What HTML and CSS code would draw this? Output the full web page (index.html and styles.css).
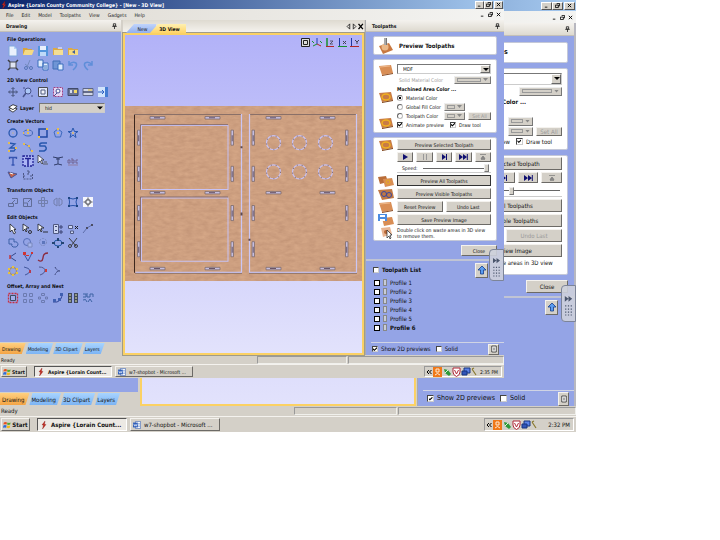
FILE: index.html
```
<!DOCTYPE html>
<html lang="en">
<head>
	<meta charset="utf-8">
	<title>Aspire</title>
	<meta name="viewport" content="width=device-width,initial-scale=1.0">
	<link rel="stylesheet" href="styles.css">
</head>
<body>
<!-- shared icons -->
<svg class="defs" aria-hidden="true">
	<defs>
		<filter id="grain" x="0" y="0" width="100%" height="100%" color-interpolation-filters="sRGB">
			<feTurbulence type="fractalNoise" baseFrequency="0.13 0.3" numOctaves="3" seed="4"/>
			<feColorMatrix values="0.3 0.1 0 0 0.61  0.3 0.1 0 0 0.43  0.25 0.1 0 0 0.33  0 0 0 0 1"/>
		</filter>
		<symbol id="i-wood" viewBox="0 0 16 12"><path d="M1 2l12-1 2 8-11 2z" fill="#d98e55"/><path d="M4 11l11-2v1L4 12z" fill="#8a4a20"/><path d="M2 3l10-1" stroke="#efb98b"/></symbol>
		<symbol id="i-woodring" viewBox="0 0 16 12"><path d="M1 2l12-1 2 8-11 2z" fill="#c87c45"/><path d="M4 11l11-2v1L4 12z" fill="#7d4219"/><ellipse cx="8" cy="6" rx="4" ry="3" fill="none" stroke="#f0b020" stroke-width="1.5"/></symbol>
		<symbol id="i-woods" viewBox="0 0 16 12"><path d="M0 1l8-1 2 6-8 2z" fill="#b96d38"/><path d="M5 3l9-1 2 7-9 2z" fill="#d98e55"/><circle cx="10" cy="6" r="2" fill="none" stroke="#e9ad20"/></symbol>
		<symbol id="i-up" viewBox="0 0 10 10"><path d="M5 1l4 4H6.500v4h-3V5H1z" fill="#5b9cf0" stroke="#143c8c" stroke-width=".8"/></symbol>
		<symbol id="i-pin" viewBox="0 0 6 8"><path d="M1.500 1h3v3h-3zM0 4.500h6M3 4.500V8" fill="none" stroke="#111"/></symbol>
		<symbol id="i-min" viewBox="0 0 6 6"><path d="M1 5h3" stroke="#000"/></symbol>
		<symbol id="i-res" viewBox="0 0 6 6"><path d="M2 .5h3.500v3H4M.5 2.500H4v3H.5z" fill="none" stroke="#000"/></symbol>
		<symbol id="i-x" viewBox="0 0 6 6"><path d="M1 1l4 4M5 1L1 5" stroke="#000" stroke-width="1.100"/></symbol>
		<symbol id="i-play" viewBox="0 0 10 8"><path d="M3 1l5 3-5 3z" fill="#101070"/></symbol>
		<symbol id="i-pause" viewBox="0 0 10 8"><path d="M3.500 1v6M6.500 1v6" stroke="#999"/></symbol>
		<symbol id="i-step" viewBox="0 0 10 8"><path d="M3 1l4 3-4 3z" fill="#101070"/><path d="M7.500 1v6" stroke="#101070"/></symbol>
		<symbol id="i-ff" viewBox="0 0 10 8"><path d="M1 1l4 3-4 3zM5 1l4 3-4 3z" fill="#101070"/><path d="M9.300 1v6" stroke="#101070"/></symbol>
		<symbol id="i-eject" viewBox="0 0 10 8"><path d="M2 1.500h6M3 6.500h4M5 3l2 2.500H3z" fill="#888" stroke="#777" stroke-width=".7"/></symbol>
		<symbol id="i-flag" viewBox="0 0 10 9"><path d="M1 1.500q2-1.500 4 0L4.500 4q-2-1-4 0z" fill="#e8501e"/><path d="M5.500 1.500q2 1 4 0L9 4q-2 1-4 0z" fill="#53a832"/><path d="M.5 5q2-1 4 0L4 8q-2-1-4 0z" fill="#2c6bd8"/><path d="M5 5q2 1 4 0L8.500 8q-2 1-4 0z" fill="#f3bb1a"/></symbol>
		<symbol id="i-aspire" viewBox="0 0 8 8"><path d="M5 0L2 4h1.500L2.500 8 6 3.500H4.500z" fill="#c8281c" stroke="#701010" stroke-width=".3"/></symbol>
		<symbol id="i-word" viewBox="0 0 10 10"><path d="M3 .5h6.500v9H3z" fill="#fff" stroke="#5a7ab8"/><path d="M5 3h4M5 5h4M5 7h4" stroke="#88a4d8"/><path d="M0 2h6v6H0z" fill="#2c5cb8"/><path d="M1 3.500l1 3 1-2 1 2 1-3" fill="none" stroke="#fff" stroke-width=".8"/></symbol>
		<symbol id="i-grip" viewBox="0 0 14 34"><path d="M3 9l4 3-4 3zM7 9l4 3-4 3z" fill="#4a556c"/><path d="M4 19v11M7 19v11M10 19v11" stroke="#4a556c" stroke-width="1.300" stroke-dasharray="1.300 2"/></symbol>
		<symbol id="i-tray" viewBox="0 0 52 10"><path d="M4 3L2 5l2 2M6.500 3l-2 2 2 2" fill="none" stroke="#000"/><path d="M8 0h9v10H8z" fill="#f07818"/><path d="M11 2h3v3h-3zM10 8q2.500-3 5 0" fill="none" stroke="#ffe8d0"/><path d="M19 2l4 1 3 4-2 2-4-3z" fill="#2e9a38"/><path d="M20 6l3-3" stroke="#dff0df"/><path d="M28 1h7v4q0 3-3.500 4.500Q28 8 28 5z" fill="#fff" stroke="#b02838"/><path d="M29.500 3l2 4 2-4" fill="none" stroke="#b02838"/><path d="M39 1h6v5h-6z" fill="#5b82e8" stroke="#17347e"/><path d="M37 4h5v4h-5z" fill="#3155b8" stroke="#17347e"/><path d="M47 2l4 6M47 2l2-1" stroke="#8a7a30" stroke-width="1.200"/></symbol>
		<symbol id="i-sheet" viewBox="0 0 8 10"><path d="M1 1h6v8H1z" fill="#fff" stroke="#222"/><path d="M3 3h2v4H3z" fill="#888"/></symbol>
		<symbol id="i-cursor" viewBox="0 0 12 12"><path d="M3 1v8l2-2 2 4 1.500-1L7 6.500h2z" fill="#fff" stroke="#111" stroke-width=".8"/></symbol>
	</defs>
</svg>

<!-- Rear screen -->
<div class="screen rear">
	<div class="titlebar">
		<span class="winbtns">
			<button aria-label="Minimize"><svg><use href="#i-min"/></svg></button><button aria-label="Restore"><svg><use href="#i-res"/></svg></button><button class="shut" aria-label="Close window"><svg><use href="#i-x"/></svg></button>
		</span>
	</div>
	<div class="menubar">
		<span class="docbtns">
			<svg><use href="#i-min"/></svg><svg><use href="#i-res"/></svg><svg><use href="#i-x"/></svg>
		</span>
	</div>
	<div class="work">
		<div class="side">
			<div class="side-body"></div>
			<div class="pages">
				<button class="page on">Drawing</button><button class="page">Modeling</button><button class="page">3D Clipart</button><button class="page">Layers</button>
			</div>
		</div>
		<div class="view"><div class="canvas"></div></div>
		<div class="panel">
			<div class="panel-head"><svg class="pin"><use href="#i-pin"/></svg></div>
			<div class="panel-body">
				<div class="card heading"><h2>Preview Toolpaths</h2></div>
				<div class="card">
					<div class="fields">
						<div class="combo"><select aria-label="Material"><option></option></select></div>
						<div class="row end"><button class="swatch wide" aria-label="Solid color"><i></i></button></div>
						<div class="row strong">Machined Area Color ...</div>
						<div class="row"></div>
						<div class="row swatches"><button class="swatch" aria-label="Fill color"><i></i></button></div>
						<div class="row swatches"><button class="swatch" aria-label="Toolpath color"><i></i></button><button class="btn setall" disabled>Set All</button></div>
						<div class="row checks"><span>Animate preview</span><label><input type="checkbox" checked>Draw tool</label></div>
					</div>
				</div>
				<div class="card actions">
					<div class="stack">
						<button class="btn">Preview Selected Toolpath</button>
						<div class="transport">
							<button class="btn" aria-label="Play"></button><button class="btn" aria-label="Pause"></button><button class="btn" aria-label="Step"><svg><use href="#i-step"/></svg></button><button class="btn" aria-label="Fast"><svg><use href="#i-ff"/></svg></button><button class="btn" aria-label="End"><svg><use href="#i-eject"/></svg></button>
						</div>
						<div class="speed"><input type="range" aria-label="Speed" min="0" max="100" value="40"></div>
						<button class="btn">Preview All Toolpaths</button>
						<button class="btn">Preview Visible Toolpaths</button>
						<div class="pair"><button class="btn" aria-label="Reset"></button><button class="btn" disabled>Undo Last</button></div>
						<button class="btn">Save Preview Image</button>
						<p class="hint">Double click on waste areas in 3D view</p>
					</div>
				</div>
				<div class="closerow"><button class="btn">Close</button></div>
			</div>
			<div class="list">
				<div class="list-head"><button class="btn up" aria-label="Move up"><svg><use href="#i-up"/></svg></button></div>
			</div>
			<div class="panel-foot">
				<label><input type="checkbox" checked>Show 2D previews</label>
				<label><input type="checkbox">Solid</label>
				<button class="btn sheet" aria-label="Sheet"><svg><use href="#i-sheet"/></svg></button>
			</div>
		</div>
	</div>
	<div class="status"><span>Ready</span><i></i><i></i></div>
	<div class="taskbar">
		<button class="btn start"><svg><use href="#i-flag"/></svg>Start</button>
		<button class="btn task on"><svg><use href="#i-aspire"/></svg>Aspire {Lorain Count...</button>
		<button class="btn task"><svg><use href="#i-word"/></svg>w7-shopbot - Microsoft ...</button>
		<div class="tray"><svg><use href="#i-tray"/></svg><span>2:32 PM</span></div>
	</div>
	<svg class="grip"><use href="#i-grip"/></svg>
</div>

<!-- Front screen -->
<div class="screen front">
	<div class="titlebar">
		<svg class="logo"><use href="#i-aspire"/></svg>
		<span class="caption">Aspire {Lorain County Community College} - [New - 3D View]</span>
		<span class="winbtns">
			<button aria-label="Minimize"><svg><use href="#i-min"/></svg></button><button aria-label="Restore"><svg><use href="#i-res"/></svg></button><button class="shut" aria-label="Close window"><svg><use href="#i-x"/></svg></button>
		</span>
	</div>
	<div class="menubar">
		<a href="#">File</a><a href="#">Edit</a><a href="#">Model</a><a href="#">Toolpaths</a><a href="#">View</a><a href="#">Gadgets</a><a href="#">Help</a>
		<span class="docbtns">
			<svg><use href="#i-min"/></svg><svg><use href="#i-res"/></svg><svg><use href="#i-x"/></svg>
		</span>
	</div>
	<div class="work">
		<div class="side">
			<div class="panel-head"><b>Drawing</b><svg class="pin"><use href="#i-pin"/></svg></div>
			<div class="side-body">
				<section class="group">
					<h3>File Operations</h3>
					<div class="tools">
						<svg viewBox="0 0 12 12"><path d="M2 1h5l3 3v7H2z" fill="#f4faff" stroke="#7fa8dc"/><path d="M7 1v3h3" fill="#b8d8f8"/></svg>
						<svg viewBox="0 0 12 12"><path d="M1 3h4l1 1h4v6H1z" fill="#e0a52c"/><path d="M3 5h9l-2 5H1z" fill="#ffe07a"/></svg>
						<svg viewBox="0 0 12 12"><path d="M1 1h10v10H1z" fill="#4c94dc"/><path d="M3 1h6v4H3z" fill="#f4f8ff"/><path d="M3 7h6v4H3z" fill="#c4e0fa"/></svg>
						<svg viewBox="0 0 12 12"><path d="M1 3h4l1 1h5v6H1z" fill="#e6ac35"/><path d="M2 5h9v5H2z" fill="#ffe58c"/><path d="M6 3h4" stroke="#fff"/></svg>
						<svg viewBox="0 0 12 12"><path d="M1 3h4l1 1h5v6H1z" fill="#e6ac35"/><path d="M2 5h9v5H2z" fill="#ffe07a"/><path d="M5 7l3-2v4z" fill="#3a5a90"/></svg>
					</div>
					<div class="tools">
						<svg viewBox="0 0 12 12"><path d="M3 3h6v6H3z" fill="#e8ecf4" stroke="#444"/><path d="M1 1l2 2M11 1L9 3M1 11l2-2M11 11L9 9" stroke="#333" stroke-width="1.500"/></svg>
						<svg viewBox="0 0 12 12"><path d="M8 1L5 8M3 5l5 4" stroke="#7088b8"/><circle cx="4" cy="9" r="1.500" fill="none" stroke="#5070b0"/><circle cx="9" cy="9" r="1.500" fill="none" stroke="#5070b0"/></svg>
						<svg viewBox="0 0 12 12"><path d="M1 1h5v7H1zM6 4h5v7H6z" fill="#e8f4ff" stroke="#3068b8"/><path d="M7 7h3M7 9h3" stroke="#3068b8"/></svg>
						<svg viewBox="0 0 12 12"><path d="M1 2h7v8H1z" fill="#6c94d4" stroke="#3868b0"/><path d="M6 5h5v6H6z" fill="#e8f4ff" stroke="#3068b8"/></svg>
						<svg viewBox="0 0 12 12"><path d="M2 2v4h4M2 6q3-4 7-2 2 3-3 7" fill="none" stroke="#5a8cd8" stroke-width="1.500"/></svg>
						<svg viewBox="0 0 12 12"><path d="M10 2v4H6M10 6Q7 2 3 4q-2 3 3 7" fill="none" stroke="#5a8cd8" stroke-width="1.500"/></svg>
					</div>
				</section>
				<section class="group">
					<h3>2D View Control</h3>
					<div class="tools">
						<svg viewBox="0 0 12 12"><path d="M6 2v8M2 6h8M4.500 3L6 1.500 7.500 3M4.500 9L6 10.500 7.500 9M3 4.500L1.500 6 3 7.500M9 4.500L10.500 6 9 7.500" fill="none" stroke="#3b4668"/></svg>
						<svg viewBox="0 0 12 12"><circle cx="6" cy="5" r="3" fill="#aecbf8" stroke="#404b80"/><path d="M4 7l-3 4" stroke="#404b80" stroke-width="1.500"/><path d="M1 2h2M9 10h2" stroke="#404b80"/></svg>
						<svg viewBox="0 0 12 12"><path d="M1.500 1.500h9v9h-9z" fill="#e8eefc" stroke="#444"/><path d="M4 4h4v4H4z" fill="#fff" stroke="#4c5878"/></svg>
						<svg viewBox="0 0 12 12"><path d="M1.500 1.500h9v9h-9z" fill="#f0dcf4" stroke="#a03878" stroke-dasharray="2 1"/><circle cx="6" cy="5" r="2" fill="#fff" stroke="#40488c"/><path d="M5 7l-3 3" stroke="#40488c"/></svg>
						<svg viewBox="0 0 12 12"><path d="M1 2.500h10v7H1z" fill="#68718c" stroke="#39415c"/><path d="M3 4h2v3H3z" fill="#dfe3f0"/><path d="M7 4h3v3H7z" fill="#ffe05a"/></svg>
						<svg viewBox="0 0 12 12"><path d="M1 2.500h10v7H1z" fill="#d8dce8" stroke="#59617c"/><path d="M1 6h10" stroke="#39415c" stroke-width="1.500"/><path d="M6 4h4" stroke="#e8bd20"/></svg>
						<svg viewBox="0 0 12 12"><path d="M1 1h10v10H1z" fill="#d8ecff"/><path d="M8 1h3v10H8z" fill="#3b78d0"/><path d="M1 6h6M5 4l2 2-2 2" fill="none" stroke="#2058c0"/></svg>
					</div>
				</section>
				<div class="layer">
					<svg viewBox="0 0 12 12"><path d="M1 8l5-3 5 2-5 4z" fill="#fff" stroke="#222"/><path d="M1 5l5-3 5 2-5 4z" fill="#fff" stroke="#222"/></svg>
					<label for="layer">Layer</label>
					<div class="combo"><select id="layer"><option>hid</option></select></div>
				</div>
				<section class="group">
					<h3>Create Vectors</h3>
					<div class="tools">
						<svg viewBox="0 0 12 12"><circle cx="6" cy="6" r="4" fill="none" stroke="#1d4fa8" stroke-width="1.300"/><path d="M5.500 5.500h1v1h-1z" fill="#eec040"/></svg>
						<svg viewBox="0 0 12 12"><ellipse cx="6" cy="6" rx="4.500" ry="3" fill="none" stroke="#3c62b0"/><path d="M5 2h2v2H5zM1 5h1v2H1zM5 5h2v2H5z" fill="#eec040"/></svg>
						<svg viewBox="0 0 12 12"><path d="M2 2h8v8H2z" fill="none" stroke="#123e9c" stroke-width="1.500"/><path d="M9 1h2v2H9zM1 9h2v2H1z" fill="#f6c52e"/></svg>
						<svg viewBox="0 0 12 12"><path d="M6 2l4 3-1.500 5h-5L2 5z" fill="none" stroke="#3563ba"/><path d="M5 1h2v2H5zM5 5h2v2H5z" fill="#eec040"/></svg>
						<svg viewBox="0 0 12 12"><path d="M6 1l1.500 3.500H11l-3 2 1 4-3-2.500-3 2.500 1-4-3-2h3.500z" fill="none" stroke="#1d4fa8"/><path d="M5 5h2v2H5z" fill="#d8b880"/></svg>
					</div>
					<div class="tools">
						<svg viewBox="0 0 12 12"><path d="M2 2l6 1-5 4h6l-2 3H3" fill="none" stroke="#1d4fa8" stroke-width="1.300"/><path d="M1 1h2v2H1zM8 6h2v2H8zM1 9h2v2H1z" fill="#eec040"/></svg>
						<svg viewBox="0 0 12 12"><path d="M2 3q5 1 7 7" fill="none" stroke="#707894"/><path d="M1 2h2v2H1zM6 4h2v2H6zM9 9h2v2H9z" fill="#eec040"/></svg>
						<svg viewBox="0 0 12 12"><path d="M10 2H5Q2 2 3 5h5q3 3-1 5H2" fill="none" stroke="#1d4fa8" stroke-width="1.500"/></svg>
					</div>
					<div class="tools">
						<svg viewBox="0 0 12 12"><path d="M2.500 4V2.500h7V4M6 2v8M4.500 10h3" fill="none" stroke="#2c4cac" stroke-width="1.300"/></svg>
						<svg viewBox="0 0 12 12"><path d="M1 1h10v10H1z" fill="#b0b8f8" stroke="#14148c" stroke-dasharray="2 1" stroke-width="1.300"/><path d="M3 3.500h6M6 3.500V10" stroke="#14148c" stroke-width="1.500"/></svg>
						<svg viewBox="0 0 12 12"><path d="M1 0v8l2-2 2 3 1-1-2-3h3z" fill="#fff" stroke="#111" stroke-width=".7"/><path d="M6 9h5M7 7h3" stroke="#555"/></svg>
						<svg viewBox="0 0 12 12"><path d="M1 2q5 2 10 0M2 10q4-2 8 0M6 3v6M4 4h4" fill="none" stroke="#27325c"/></svg>
						<svg viewBox="0 0 12 12"><path d="M1 5h2v3H1zM5 3v5h2V5H5M11 5H9v3h2" fill="none" stroke="#6c5d88"/><path d="M1 10h10" stroke="#907898"/></svg>
					</div>
					<div class="tools">
						<svg viewBox="0 0 12 12"><path d="M1 3l9 2-6 4z" fill="#c85c3c" stroke="#444c88"/><path d="M3 4l3 1" stroke="#fff"/></svg>
						<svg viewBox="0 0 12 12"><path d="M1.500 4v6h9V4M1 7h3M8 7h3" fill="none" stroke="#46507c" stroke-dasharray="2 1"/><path d="M5 2h2v2H6v2" fill="none" stroke="#46507c"/></svg>
					</div>
				</section>
				<section class="group">
					<h3>Transform Objects</h3>
					<div class="tools">
						<svg viewBox="0 0 12 12"><path d="M1.500 7.500h5v3h-5zM5 2.500h5.500v5H8" fill="none" stroke="#5c6890"/><path d="M4 8l4-4" stroke="#5c6890"/></svg>
						<svg viewBox="0 0 12 12"><path d="M1.500 2.500h8v8h-8zM1.500 7h4v3.500" fill="none" stroke="#5c6890"/><path d="M6 6l3-3" stroke="#5c6890"/></svg>
						<svg viewBox="0 0 12 12"><path d="M1.500 4.500h9v3h-9zM4.500 1.500h3v9h-3z" fill="none" stroke="#6f7ba6"/></svg>
						<svg viewBox="0 0 12 12"><path d="M5 2L2 4v4l3 2zM7 2l3 2v4l-3 2z" fill="none" stroke="#6f7ba6"/></svg>
						<svg viewBox="0 0 12 12"><path d="M2 2q4 2 8 0-2 4 0 8-4-1-8 0 1-4 0-8z" fill="none" stroke="#1c4aa4"/><path d="M1 1h2v2H1zM9 1h2v2H9zM1 9h2v2H1zM9 9h2v2H9z" fill="#123c78"/></svg>
						<svg viewBox="0 0 12 12"><path d="M1 1h10v10H1z" fill="#fff"/><path d="M4 4h4v4H4zM6 1.500V4M6 8v2.500M1.500 6H4M8 6h2.500" fill="none" stroke="#444"/></svg>
					</div>
				</section>
				<section class="group">
					<h3>Edit Objects</h3>
					<div class="tools">
						<svg><use href="#i-cursor"/></svg>
						<svg viewBox="0 0 12 12"><path d="M1 1v7l2-2 1 3 1-1-1-3h3z" fill="#fff" stroke="#111" stroke-width=".8"/><circle cx="8" cy="9" r="1.500" fill="none" stroke="#222"/></svg>
						<svg viewBox="0 0 12 12"><path d="M1 1v7l2-2 1 3 1-1-1-3h3z" fill="#fff" stroke="#111" stroke-width=".8"/><path d="M6 9h5" stroke="#222"/></svg>
						<svg viewBox="0 0 12 12"><path d="M1.500 1.500h5v9h-5z" fill="#d4dcf4" stroke="#4a5378"/><path d="M3 3.500h2M3 7.500h2M8 3h2v2H8zM8 8h2v2H8z" stroke="#333b68" fill="none"/></svg>
						<svg viewBox="0 0 12 12"><path d="M1.500 2.500h4v3h-4zM3.500 8h3v2.500h-3z" fill="#d4dcf4" stroke="#4a5378"/><path d="M8 3l3 3M11 3L8 6" stroke="#111"/></svg>
						<svg viewBox="0 0 12 12"><path d="M1 10l4-5 5-3" fill="none" stroke="#5868a4"/><path d="M4 4h2v2H4zM9 1h2v2H9z" fill="#445"/></svg>
					</div>
					<div class="tools">
						<svg viewBox="0 0 12 12"><path d="M2 2h5v3q4-1 4 3-1 3-5 2-2-1-1-3H2z" fill="none" stroke="#3558a0"/></svg>
						<svg viewBox="0 0 12 12"><circle cx="5" cy="5" r="3.500" fill="none" stroke="#5068b0"/><path d="M6 6h4v4H6z" fill="#aabaf0" stroke="#7886b8"/></svg>
						<svg viewBox="0 0 12 12"><circle cx="6" cy="5" r="3.500" fill="none" stroke="#7886b8" stroke-dasharray="2 1"/><path d="M5 4h3v3H5z" fill="#5872b8"/></svg>
						<svg viewBox="0 0 12 12"><ellipse cx="6" cy="6" rx="4" ry="3" fill="none" stroke="#12509c"/><path d="M5 1h2v3H5zM0 5h3v2H0zM9 5h3v2H9zM5 9h2v2H5z" fill="#183a66"/></svg>
						<svg viewBox="0 0 12 12"><path d="M2 1l7 8M10 1L4 9" stroke="#333"/><circle cx="3" cy="9" r="1.500" fill="none" stroke="#333"/><circle cx="9" cy="9" r="1.500" fill="none" stroke="#333"/></svg>
					</div>
					<div class="tools">
						<svg viewBox="0 0 12 12"><path d="M9 2L3 6l6 4" fill="none" stroke="#2b3d80"/><path d="M3 4v4" stroke="#c83030" stroke-width="1.500"/></svg>
						<svg viewBox="0 0 12 12"><path d="M2 3l4 7 4-8" fill="none" stroke="#304c9c"/><path d="M1 1h3v3H1zM9 1h2v2H9zM4 4h3v1H4z" fill="#d82820"/></svg>
						<svg viewBox="0 0 12 12"><path d="M1 9q4 3 5-2 0-5 5-5" fill="none" stroke="#8b2030" stroke-width="1.300"/></svg>
					</div>
					<div class="tools">
						<svg viewBox="0 0 12 12"><circle cx="6" cy="6" r="3.500" fill="none" stroke="#a89060" stroke-width="1.300"/><path d="M5 1h2v2H5zM1 7h2v2H1zM9 7h2v2H9zM9 3h2v2H9zM1 3h2v2H1zM5 9h2v2H5z" fill="#f2c52c"/></svg>
						<svg viewBox="0 0 12 12"><path d="M2 2q6 1 6 4-1 3-5 4" fill="none" stroke="#3a4f94"/><path d="M7 5h2v3H7z" fill="#b83040"/></svg>
						<svg viewBox="0 0 12 12"><path d="M2 2q6 0 6 4-1 3-5 4" fill="none" stroke="#4a4f84"/><path d="M8 4h2v3H8z" fill="#d43028"/></svg>
						<svg viewBox="0 0 12 12"><path d="M3 2q2 4 5 4-4 0-5 4" fill="none" stroke="#333d70" stroke-dasharray="3 1"/></svg>
					</div>
				</section>
				<section class="group">
					<h3>Offset, Array and Nest</h3>
					<div class="tools">
						<svg viewBox="0 0 12 12"><path d="M1.500 1.500h9v9h-9z" fill="none" stroke="#cc2432" stroke-width="1.300" stroke-dasharray="2 1"/><path d="M3.500 3.500h5v5h-5z" fill="#a4b0ec" stroke="#345"/></svg>
						<svg viewBox="0 0 12 12"><path d="M1.500 1.500h3v3h-3zM7.500 1.500h3v3h-3zM1.500 7.500h3v3h-3zM7.500 7.500h3v3h-3z" fill="none" stroke="#6877ac"/></svg>
						<svg viewBox="0 0 12 12"><path d="M4.500 1.500h3v2h-3zM4.500 8.500h3v2h-3zM1.500 5h2v2h-2zM8.500 5h2v2h-2z" fill="none" stroke="#6877ac"/></svg>
						<svg viewBox="0 0 12 12"><path d="M1 10h4q5-2 5-8" fill="none" stroke="#283c8c"/><path d="M1 7h3v3H1zM6 6h3v3H6zM8 1h3v3H8z" fill="#3858ac"/></svg>
						<svg viewBox="0 0 12 12"><path d="M1 1h4v10H1zM7 1h4v10H7z" fill="#39404c"/><path d="M2 3h2M2 6h2M8 3h2M8 6h2M2 9h2M8 9h2" stroke="#eef0a8"/></svg>
						<svg viewBox="0 0 12 12"><path d="M1 2h3v3H1M5 1v4h3V2h3v3M1 8q3-2 4 2M6 10l2-3 2 3" fill="none" stroke="#345c9c"/></svg>
					</div>
				</section>
			</div>
			<div class="pages">
				<button class="page on">Drawing</button><button class="page">Modeling</button><button class="page">3D Clipart</button><button class="page">Layers</button>
			</div>
		</div>
		<div class="view">
			<div class="doctabs">
				<button class="doctab">New</button><button class="doctab on">3D View</button>
				<svg class="docnav" viewBox="0 0 20 8"><path d="M4 1v6L1 4zM8 1v6l3-3z" fill="none" stroke="#222"/><path d="M14 1l5 6M19 1l-5 6" stroke="#000" stroke-width="1.500"/></svg>
			</div>
			<div class="canvas">
				<svg class="axes" viewBox="0 0 60 12">
					<path d="M1.500 1.500h8v8h-8z" fill="#ddd" stroke="#222"/><path d="M3.500 3.500h4v4h-4z" fill="none" stroke="#222"/>
					<path d="M17 1v6" stroke="#2040b0"/><path d="M17 7l-4 2" stroke="#18912c"/><path d="M17 7l4 2" stroke="#b02828"/><path d="M12 4l2 2M20 4l2 2" stroke="#18912c"/>
					<path d="M27 1v9" stroke="#189030" stroke-width="1.500"/><path d="M26 9.500h8" stroke="#b02828"/><path d="M30 4h3l-3 3h3" fill="none" stroke="#445" stroke-width=".8"/>
					<path d="M39.500 1v9" stroke="#2038a0"/><path d="M38 9.500h9" stroke="#189030"/><path d="M43 4l3 3M46 4l-3 3" stroke="#445"/>
					<path d="M51.500 1v9" stroke="#2038a0"/><path d="M50 9.500h9" stroke="#b02828"/><path d="M55 3l2 2 2-2M57 5v2" fill="none" stroke="#445"/>
				</svg>
				<!-- sheet of MDF with the cut profiles -->
				<svg class="board" viewBox="124 107 237 174" preserveAspectRatio="none">
					<defs>
						<g id="slot-h"><path d="M0 0h15v2.500H0z" fill="#c4bde0" stroke="#7e6b6c" stroke-width=".8"/><path d="M4 1.200h6" stroke="#6a5668"/></g>
						<g id="slot-v"><path d="M0 0h2.500v15H0z" fill="#c4bde0" stroke="#7e6b6c" stroke-width=".8"/><path d="M1.200 5v6" stroke="#6a5668"/></g>
						<g id="hrow"><use href="#slot-h" x="149"/><use href="#slot-h" x="204"/><use href="#slot-h" x="265"/><use href="#slot-h" x="319"/></g>
						<g id="vcol"><use href="#slot-v" y="131"/><use href="#slot-v" y="167"/><use href="#slot-v" y="206"/><use href="#slot-v" y="242"/></g>
					</defs>
					<path d="M124 107h238v174H124z" fill="#cd9f80"/>
					<path d="M124 107h238v174H124z" filter="url(#grain)" opacity=".3"/>
					<path d="M133.500 273V115" stroke="#3e281e"/>
					<path d="M133 115.500h107.500M248 115.500h108" stroke="#8a7068"/>
					<path d="M134.500 272.500h106V115M248.500 115v157.500h107V115" fill="none" stroke="#cbc6f4" stroke-width="1.200"/>
					<path d="M134 273.500h107M248 273.500h108" stroke="#74625f" stroke-width=".7"/>
					<path d="M140.500 126.500h86.500V190h-86.500zM140.500 198.500h86.500V261.500h-86.500z" fill="none" stroke="#c8c2f4"/>
					<path d="M139.500 190v-64.500H227M139.500 261v-63.500H227" fill="none" stroke="#6f5c68" stroke-width=".7"/>
					<use href="#hrow" y="117.500"/><use href="#hrow" y="192"/><use href="#hrow" y="267.500"/>
					<use href="#vcol" x="136.500"/><use href="#vcol" x="230"/><use href="#vcol" x="251"/><use href="#vcol" x="344.500"/>
					<g fill="none" stroke="#c8c2f2" stroke-width="1.200"><circle cx="272.500" cy="143.500" r="7"/><circle cx="298.500" cy="143.500" r="7"/><circle cx="324.500" cy="143.500" r="7"/><circle cx="272.500" cy="172.500" r="7"/><circle cx="298.500" cy="172.500" r="7"/><circle cx="324.500" cy="172.500" r="7"/></g>
					<g fill="none" stroke="#7b666c" stroke-dasharray="1 4"><circle cx="272.500" cy="143.500" r="7"/><circle cx="298.500" cy="143.500" r="7"/><circle cx="324.500" cy="143.500" r="7"/><circle cx="272.500" cy="172.500" r="7"/><circle cx="298.500" cy="172.500" r="7"/><circle cx="324.500" cy="172.500" r="7"/></g>
					<path d="M239.500 147h2v2h-2zM239.500 213h2v3h-2zM247.500 239h2v2h-2z" fill="#5d4a50"/>
				</svg>
			</div>
		</div>
		<div class="panel">
			<div class="panel-head"><b>Toolpaths</b><svg class="pin"><use href="#i-pin"/></svg></div>
			<div class="panel-body">
				<div class="card heading">
					<svg class="bit" viewBox="0 0 16 16"><path d="M1 8l10-3 4 7-10 4z" fill="#c87840"/><circle cx="7" cy="9" r="3.500" fill="#eab888"/><path d="M6 0h3v7H6z" fill="#777"/><path d="M7 0v7" stroke="#ddd"/></svg>
					<h2>Preview Toolpaths</h2>
				</div>
				<div class="card">
					<div class="pics"><svg><use href="#i-wood"/></svg><svg><use href="#i-woodring"/></svg><svg><use href="#i-woodring"/></svg></div>
					<div class="fields">
						<div class="combo"><select aria-label="Material"><option>MDF</option></select></div>
						<div class="row end"><span class="dim">Solid Material Color</span><button class="swatch wide" aria-label="Solid color"><i></i></button></div>
						<div class="row strong">Machined Area Color ...</div>
						<div class="row"><label><input type="radio" name="area" checked>Material Color</label></div>
						<div class="row swatches"><label><input type="radio" name="area">Global Fill Color</label><button class="swatch" aria-label="Fill color"><i></i></button></div>
						<div class="row swatches"><label><input type="radio" name="area">Toolpath Color</label><button class="swatch" aria-label="Toolpath color"><i></i></button><button class="btn setall" disabled>Set All</button></div>
						<div class="row checks"><label><input type="checkbox" checked>Animate preview</label><label><input type="checkbox" checked>Draw tool</label></div>
					</div>
				</div>
				<div class="card actions">
					<div class="pics">
						<svg><use href="#i-woodring"/></svg>
						<svg class="gap"><use href="#i-woods"/></svg>
						<svg viewBox="0 0 16 12"><path d="M0 1l14-1 2 9-12 2z" fill="#c07844"/><circle cx="6" cy="5" r="2.500" fill="none" stroke="#3a48a0"/><circle cx="11" cy="6" r="2.500" fill="none" stroke="#3a48a0"/></svg>
						<svg><use href="#i-wood"/></svg>
						<svg viewBox="0 0 16 12"><path d="M4 4l10-1 2 7-10 2z" fill="#d98e55"/><path d="M0 0h9v7H0z" fill="#4c8ce0"/><path d="M2 1h5v2H2zM2 5h5v2H2z" fill="#fff"/></svg>
						<svg viewBox="0 0 16 12"><path d="M3 1l9-1 2 7-9 3z" fill="#e8b492"/><circle cx="8" cy="5" r="2" fill="#b86838"/><path d="M9 3v8l2-2 1 3 1-1-1-3h2z" fill="#fff" stroke="#222" stroke-width=".7"/></svg>
					</div>
					<div class="stack">
						<button class="btn">Preview Selected Toolpath</button>
						<div class="transport">
							<button class="btn" aria-label="Play"><svg><use href="#i-play"/></svg></button><button class="btn" aria-label="Pause"><svg><use href="#i-pause"/></svg></button><button class="btn" aria-label="Step"><svg><use href="#i-step"/></svg></button><button class="btn" aria-label="Fast"><svg><use href="#i-ff"/></svg></button><button class="btn" aria-label="End"><svg><use href="#i-eject"/></svg></button>
						</div>
						<div class="speed"><label for="speed">Speed:</label><input type="range" id="speed" min="0" max="100" value="100"></div>
						<button class="btn default">Preview All Toolpaths</button>
						<button class="btn">Preview Visible Toolpaths</button>
						<div class="pair"><button class="btn">Reset Preview</button><button class="btn">Undo Last</button></div>
						<button class="btn">Save Preview Image</button>
						<p class="hint">Double click on waste areas in 3D view<br>to remove them.</p>
					</div>
				</div>
				<div class="closerow"><button class="btn">Close</button></div>
			</div>
			<div class="list">
				<div class="list-head"><label><input type="checkbox">Toolpath List</label><button class="btn up" aria-label="Move up"><svg><use href="#i-up"/></svg></button></div>
				<ul>
					<li><label><input type="checkbox"><i></i>Profile 1</label></li>
					<li><label><input type="checkbox"><i></i>Profile 2</label></li>
					<li><label><input type="checkbox"><i></i>Profile 3</label></li>
					<li><label><input type="checkbox"><i></i>Profile 4</label></li>
					<li><label><input type="checkbox"><i></i>Profile 5</label></li>
					<li class="current"><label><input type="checkbox"><i></i>Profile 6</label></li>
				</ul>
			</div>
			<div class="panel-foot">
				<label><input type="checkbox" checked>Show 2D previews</label>
				<label><input type="checkbox">Solid</label>
				<button class="btn sheet" aria-label="Sheet"><svg><use href="#i-sheet"/></svg></button>
			</div>
		</div>
	</div>
	<div class="status"><span>Ready</span><i></i><i></i></div>
	<div class="taskbar">
		<button class="btn start"><svg><use href="#i-flag"/></svg>Start</button>
		<button class="btn task on"><svg><use href="#i-aspire"/></svg>Aspire {Lorain Count...</button>
		<button class="btn task"><svg><use href="#i-word"/></svg>w7-shopbot - Microsoft ...</button>
		<div class="tray"><svg><use href="#i-tray"/></svg><span>2:35 PM</span></div>
	</div>
	<svg class="grip"><use href="#i-grip"/></svg>
</div>
</body>
</html>
```
FILE: styles.css
```
*{
	box-sizing: border-box;
}
body{
	margin: 0;
	min-height: 100vh;
	background: #fff;
	font-family: "DejaVu Sans Condensed", "Liberation Sans", sans-serif;
}
.defs{
	position: absolute;
	width: 0;
	height: 0;
}
svg{
	display: block;
	flex: none;
}
button, select, input{
	font: inherit;
	color: inherit;
	margin: 0;
	padding: 0;
}
h2, h3, p, ul{
	margin: 0;
	padding: 0;
}

/* the two screens overlap, the front one is the smaller */
.screen{
	position: absolute;
	top: 0;
	left: 0;
	display: flex;
	flex-direction: column;
	overflow: hidden;
	background: #d4d0c8;
	color: #111;
	white-space: nowrap;
	font-size: var(--text);
	line-height: var(--line);
}
.front{
	--text: 5px;
	--line: 6px;
	--title: 9px;
	--menu: 11px;
	--head: 12px;
	--side: 122px;
	--panel: 138px;
	--pages: 13px;
	--combo: 10px;
	--row: 9px;
	--btn: 11px;
	--play: 10px;
	--speed: 9px;
	--swatch: 21px;
	--wide: 37px;
	--setall: 23px;
	--box: 6px;
	--icon: 16px;
	--closew: 36px;
	--foot: 13px;
	--status: 10px;
	--tasks: 13px;
	--task: 78px;
	--start: 26px;
	--tray: 78px;
	width: 70vw;
	height: 70vh;
}
.rear{
	--text: 6px;
	--line: 7px;
	--title: 11px;
	--menu: 12px;
	--head: 13px;
	--side: 139px;
	--panel: 158px;
	--pages: 14px;
	--combo: 12px;
	--row: 10px;
	--btn: 13px;
	--play: 11px;
	--speed: 12px;
	--swatch: 25px;
	--wide: 43px;
	--setall: 26px;
	--box: 7px;
	--icon: 18px;
	--closew: 42px;
	--foot: 16px;
	--status: 11px;
	--tasks: 15px;
	--task: 90px;
	--start: 29px;
	--tray: 90px;
	width: 80vw;
	height: 80vh;
}

.titlebar{
	display: flex;
	align-items: center;
	flex: none;
	height: var(--title);
	padding-right: 1px;
	background: linear-gradient(90deg, #0a246a, #a6caf0);
	color: #fff;
	font-weight: bold;
}
.logo{
	width: 8px;
	height: 8px;
}
.winbtns, .docbtns{
	display: flex;
	margin-left: auto;
}
.winbtns button{
	display: grid;
	place-items: center;
	width: var(--title);
	height: 8px;
	border: 1px solid;
	border-color: #fff #555 #555 #fff;
	background: #d4d0c8;
}
.winbtns .shut{
	margin-left: 1px;
}
.winbtns svg, .docbtns svg{
	width: 5px;
	height: 5px;
}
.docbtns{
	gap: 3px;
	padding-right: 3px;
}
.menubar{
	display: flex;
	align-items: center;
	flex: none;
	gap: 8px;
	height: var(--menu);
	padding-left: 6px;
	background: linear-gradient(90deg, #dedad2, #f4f4f2);
}
.menubar a{
	color: #222;
	text-decoration: none;
}
.work{
	display: flex;
	flex: 1;
	min-height: 0;
}

/* left side */
.side{
	display: flex;
	flex-direction: column;
	flex: none;
	width: var(--side);
	padding-right: 1px;
}
.panel-head{
	display: flex;
	align-items: center;
	flex: none;
	height: var(--head);
	padding: 0 4px 0 6px;
	background: linear-gradient(#f4f2ee, #dedad0);
	border-bottom: 1px solid #c4c0b8;
}
.pin{
	width: 5px;
	height: 6px;
	margin-left: auto;
}
.side-body{
	display: flex;
	flex-direction: column;
	flex: 1;
	gap: 3px;
	min-height: 0;
	padding: 2px 7px 0;
	background: #94a4e6;
}
.group h3{
	height: 10px;
	font-size: var(--text);
	line-height: 10px;
}
.tools{
	display: flex;
	gap: 3px;
	height: 14px;
	padding-top: 1px;
}
.tools svg{
	width: 12px;
	height: 12px;
	opacity: .9;
}
.layer{
	display: flex;
	align-items: center;
	gap: 2px;
	height: 12px;
	margin-bottom: -1px;
	padding-left: 1px;
}
.layer label{
	width: 17px;
	font-weight: bold;
}
.layer svg{
	width: 10px;
	height: 10px;
}
.layer .combo{
	width: 66px;
}
.pages{
	display: flex;
	flex: none;
	height: var(--pages);
	padding: 1px 0;
	background: #d4d0c8;
}
.page{
	padding: 0 5px 0 2px;
	border: 0;
	background: linear-gradient(#a8d4ff, #7cb4f4);
	clip-path: polygon(3px 0, 100% 0, calc(100% - 4px) 100%, 0 100%);
}
.page.on{
	background: linear-gradient(#ffd080, #f4a444);
	clip-path: polygon(0 0, 100% 0, calc(100% - 4px) 100%, 0 100%);
}

/* document view */
.view{
	display: flex;
	flex-direction: column;
	flex: 1;
	min-width: 0;
	padding: 0 1px;
	border-right: 1px solid #aaa;
}
.doctabs{
	display: flex;
	align-items: flex-end;
	flex: none;
	height: 13px;
	padding-left: 3px;
	background: linear-gradient(#dedad0, #f6f4f0);
}
.doctab{
	width: 30px;
	height: 9px;
	padding: 0 0 0 3px;
	border: 0;
	background: linear-gradient(#c0d4fc, #94b0ec);
	clip-path: polygon(8px 0, 100% 0, 100% 100%, 0 100%);
}
.doctab.on{
	width: 36px;
	margin-left: -6px;
	background: linear-gradient(#fff0b0, #ffd468);
	font-weight: bold;
}
.docnav{
	width: 18px;
	height: 7px;
	margin: 0 0 3px auto;
}
.canvas{
	flex: 1;
	display: flex;
	flex-direction: column;
	min-height: 0;
	border: 2px solid #fbd164;
	outline: 1px solid #a09c88;
	background: linear-gradient(#b2b2f8, #e2e2fc);
}
.rear .canvas{
	outline: 0;
}
.axes{
	width: 60px;
	height: 12px;
	margin: 2px 2px 0 auto;
}
.board{
	width: 100%;
	height: 55%;
	margin: 24% 0 auto;
}

/* toolpath panel */
.panel{
	display: flex;
	flex-direction: column;
	flex: none;
	width: var(--panel);
	background: #94a4e6;
}
.rear .panel{
	border-right: 2px solid #b8b8c0;
}
.panel-body{
	display: flex;
	flex-direction: column;
	flex: none;
	gap: 4px;
	padding: 4px 7px 3px;
	border-bottom: 2px solid #c0c4d4;
}
.rear .panel-body{
	gap: 5px;
	padding: 6px 6px 3px;
}
.card{
	display: flex;
	gap: 3px;
	padding: 4px 5px 3px 4px;
	border: 1px solid #c4c8d8;
	border-radius: 2px;
	background: #fff;
}
.card.heading{
	align-items: center;
	gap: 5px;
	height: 19px;
	padding: 0 4px;
}
.rear .card.heading{
	height: 21px;
	padding-left: 18px;
}
.card h2{
	font-size: 6px;
}
.rear .card h2{
	font-size: 7px;
}
.bit{
	width: 16px;
	height: 16px;
}
.pics{
	display: flex;
	flex-direction: column;
	justify-content: space-between;
	flex: none;
	width: var(--icon);
}
.pics svg{
	width: 16px;
	height: 12px;
}
.pics .gap{
	margin-top: 24px;
}
.fields, .stack{
	display: flex;
	flex-direction: column;
	flex: 1;
	min-width: 0;
}
.rear .fields{
	margin-left: 26px;
}
.rear .stack{
	margin-left: 18px;
}
.combo{
	position: relative;
	height: var(--combo);
	margin-bottom: 1px;
}
.combo select{
	appearance: none;
	width: 100%;
	height: 100%;
	padding-left: 5px;
	border: 1px solid;
	border-color: #777 #ccc #ccc #777;
	border-radius: 0;
	background-color: #fff;
}
.combo::after{
	content: "";
	position: absolute;
	top: 1px;
	right: 1px;
	bottom: 1px;
	width: 8px;
	background: #000;
	clip-path: polygon(1px 3px, 7px 3px, 4px 6px);
}
.combo::before{
	content: "";
	position: absolute;
	top: 1px;
	right: 1px;
	bottom: 1px;
	width: 8px;
	border: 1px solid;
	border-color: #fff #666 #666 #fff;
	background: #d4d0c8;
}
.layer .combo::before{
	border: 0;
}
.layer .combo select{
	background-color: #d4d0c8;
}
.row{
	display: flex;
	align-items: center;
	height: var(--row);
}
.strong{
	font-weight: bold;
}
.row.end{
	justify-content: flex-end;
}
.dim{
	margin: 0 auto 0 2px;
	color: #999;
}
.swatches{
	justify-content: flex-end;
	gap: 3px;
}
.swatches label{
	margin-right: auto;
}
/* leaves the place of the Set All button free */
.swatches .swatch:last-child{
	margin-right: calc(var(--setall) + 3px);
}
.swatch{
	display: flex;
	align-items: center;
	gap: 2px;
	width: var(--swatch);
	height: calc(var(--row) - 1px);
	padding: 0 2px;
	border: 1px solid;
	border-color: #eee #777 #777 #eee;
	background: #d4d0c8;
}
.swatch.wide{
	width: var(--wide);
}
.swatch i{
	flex: 1;
	height: 4px;
	border: 1px solid #999;
}
.swatch::after{
	content: "";
	width: 5px;
	height: 3px;
	background: #888;
	clip-path: polygon(0 0, 100% 0, 50% 100%);
}
.btn{
	display: flex;
	align-items: center;
	justify-content: center;
	flex: none;
	height: var(--btn);
	border: 1px solid;
	border-color: #f4f2ee #6c6a66 #6c6a66 #f4f2ee;
	border-radius: 0;
	background: #d4d0c8;
}
.btn:disabled{
	color: #999;
}
.btn.default{
	border-color: #333;
}
.btn.setall{
	width: var(--setall);
	height: calc(var(--row) - 1px);
}
label{
	display: flex;
	align-items: center;
	gap: 3px;
}
.checks{
	gap: 6px;
}
.rear .checks{
	justify-content: flex-end;
	padding-right: 10px;
}
input[type=checkbox], input[type=radio]{
	appearance: none;
	display: grid;
	place-items: center;
	flex: none;
	width: var(--box);
	height: var(--box);
	border: 1px solid;
	border-color: #444 #ccc #ccc #444;
	background: #fff;
}
input[type=checkbox]:checked::before{
	content: "";
	width: 4px;
	height: 4px;
	background: #000;
	clip-path: polygon(0 30%, 35% 60%, 100% 0, 100% 40%, 35% 100%, 0 70%);
}
input[type=radio]{
	border-color: #666 #bbb #bbb #666;
	border-radius: 50%;
}
input[type=radio]:checked::before{
	content: "";
	width: 2px;
	height: 2px;
	background: #000;
}
.card.actions{
	padding: 1px 5px 1px 4px;
}
.actions .stack{
	gap: 2px;
}
.transport, .pair{
	display: flex;
	gap: 3px;
}
.transport .btn{
	flex: 1;
	height: var(--play);
}
.transport svg{
	width: 10px;
	height: 8px;
}
.pair .btn{
	flex: 1;
}
.speed{
	display: flex;
	align-items: center;
	gap: 5px;
	height: var(--speed);
	padding: 0 2px 0 5px;
	border-bottom: 1px solid #ccc;
}
.speed input{
	appearance: none;
	flex: 1;
	min-width: 0;
	height: 8px;
	background: linear-gradient(#666, #666) center / 100% 1px no-repeat;
}
.rear .speed{
	padding-left: 32px;
}
.speed input::-webkit-slider-thumb{
	appearance: none;
	width: 5px;
	height: 8px;
	border: 1px solid;
	border-color: #eee #777 #777 #eee;
	background: #d4d0c8;
}
.hint{
	height: calc(var(--line) * 2);
}
.closerow{
	display: flex;
	justify-content: flex-end;
}
.closerow .btn{
	width: var(--closew);
}
.list{
	flex: 1;
	min-height: 0;
	padding: 1px 7px;
}
.list-head{
	display: flex;
	align-items: center;
	justify-content: flex-end;
	height: 16px;
	padding-right: 9px;
	font-size: 6px;
	font-weight: bold;
}
.list-head label{
	margin-right: auto;
}
.btn.up{
	width: 13px;
	height: 15px;
}
.up svg{
	width: 10px;
	height: 10px;
}
.list ul{
	padding-left: 1px;
	list-style: none;
}
.list li{
	display: flex;
	align-items: center;
	height: 9px;
	font-size: 6px;
}
.list li input{
	border-color: #000;
}
.list li i{
	width: 4px;
	height: 7px;
	border: 1px solid #888;
	background: #c8ccd8;
}
.list .current{
	font-weight: bold;
}
.panel-foot{
	display: flex;
	align-items: center;
	flex: none;
	gap: 5px;
	height: var(--foot);
	margin-left: 5px;
	padding: 0 5px 0 1px;
	border-top: 1px solid #d0d4e4;
	font-size: 6px;
}
.rear .panel-foot{
	padding-left: 4px;
	font-size: 7px;
}
.btn.sheet{
	width: 11px;
	height: calc(var(--foot) - 2px);
	margin-left: auto;
}
.sheet svg{
	width: 6px;
	height: 8px;
}

/* bottom bars */
.status{
	display: grid;
	grid-template-columns: 51fr 18fr 31fr;
	gap: 1px;
	flex: none;
	height: var(--status);
	padding: 1px 0;
	border-bottom: 1px solid #f4f2ee;
}
.status i{
	border: 1px solid;
	border-color: #999 #f0f0ec #f0f0ec #999;
}
.status span{
	padding-left: 1px;
	line-height: 8px;
}
.taskbar{
	display: flex;
	align-items: center;
	flex: none;
	gap: 3px;
	height: var(--tasks);
	padding: 0 2px 0 1px;
}
.taskbar .btn{
	height: calc(var(--tasks) - 2px);
}
.taskbar .btn svg{
	width: 8px;
	height: 8px;
}
.start{
	gap: 1px;
	width: var(--start);
	margin-right: 4px;
	font-weight: bold;
}
.taskbar .task{
	justify-content: flex-start;
	gap: 3px;
	width: var(--task);
	padding-left: 2px;
	overflow: hidden;
}
.taskbar .task.on{
	border-color: #555 #fff #fff #555;
	background: #ece9e4;
	font-weight: bold;
}
.tray{
	display: flex;
	align-items: center;
	justify-content: space-between;
	width: var(--tray);
	height: calc(var(--tasks) - 2px);
	margin-left: auto;
	padding-right: 3px;
	border: 1px solid;
	border-color: #999 #fff #fff #999;
}
.tray svg{
	width: 52px;
	height: 10px;
}

/* side handle that lies over the panel */
.grip{
	position: absolute;
	top: 66%;
	right: 0;
	width: 15px;
	height: 32px;
	border: 1px solid #7c8498;
	border-radius: 4px 0 0 4px;
	background: rgba(205, 208, 220, .9);
}
.rear .grip{
	height: 37px;
}
```
